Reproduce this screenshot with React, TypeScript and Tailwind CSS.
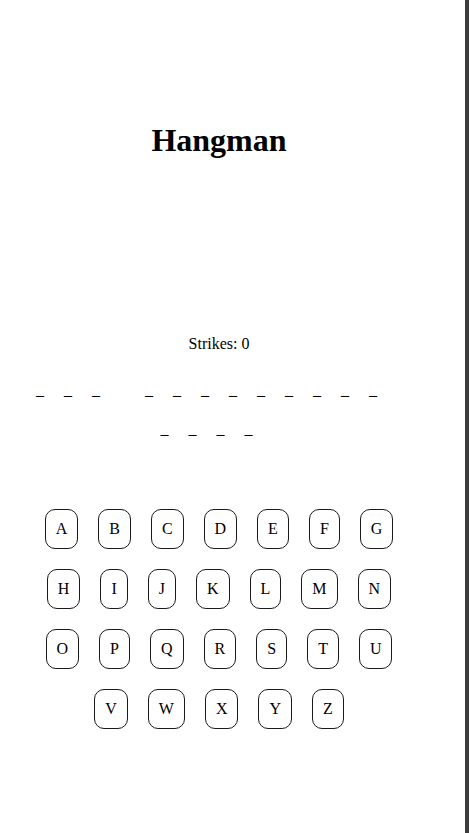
const WORDS = ['___', '_________', '____']
const LETTERS = 'ABCDEFGHIJKLMNOPQRSTUVWXYZ'.split('')

export default function App() {
  return (
    <div className="flex min-h-screen w-full bg-white font-['Liberation_Serif',serif] text-black">
      <main className="flex w-[438px] shrink-0 flex-col items-center">
        <h1 className="mt-[122px] text-[32px] font-bold leading-[1.15]">Hangman</h1>

        <p className="mt-[176px] text-[16px] leading-[1.15]">Strikes: 0</p>

        <div className="mt-[18px] flex w-full flex-wrap justify-center">
          {WORDS.map((word, i) => (
            <div key={i} className="mr-[25px] flex">
              {word.split('').map((ch, j) => (
                <span key={j} className="m-[10px] text-[16px] leading-[1.15]">
                  {ch}
                </span>
              ))}
            </div>
          ))}
        </div>

        <div className="mt-[51px] flex w-[400px] flex-wrap justify-center">
          {LETTERS.map((letter) => (
            <button
              key={letter}
              className="m-[10px] rounded-[10px] border border-[#1a1a1a] bg-white px-[10px] py-[10px] text-[16px] leading-[18px]"
            >
              {letter}
            </button>
          ))}
        </div>
      </main>
      <div className="ml-auto min-h-screen w-[4px] bg-[#3b3b3b]" />
    </div>
  )
}
